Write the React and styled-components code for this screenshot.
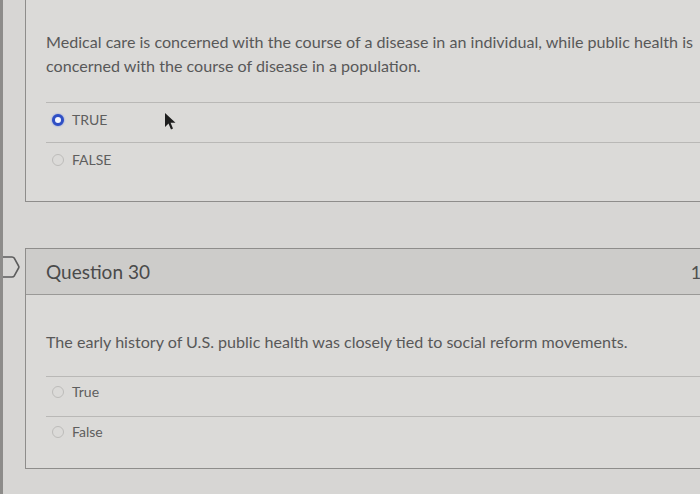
import React from 'react'
import styled, { createGlobalStyle } from 'styled-components'

const GlobalStyle = createGlobalStyle`
	html, body {
		margin: 0;
		padding: 0;
		overflow: hidden;
		background: #d7d6d4;
	}
	body {
		font-family: Lato, "Open Sans", "Liberation Sans", sans-serif;
		color: #585858;
	}
`

const Page = styled.main`
	width: 700px;
	height: 494px;
	overflow: hidden;
	position: relative;
	border-left: 3px solid #8d8c8a;
	box-sizing: border-box;
	display: flex;
	flex-direction: column;
	gap: 46px;
`

const QuestionRow = styled.div`
	display: flex;
	align-items: flex-start;
`

const Gutter = styled.div`
	width: 22px;
	flex: none;
	padding-top: ${({ offset }) => offset || 0}px;
	overflow: hidden;
`

const Card = styled.section`
	flex: none;
	width: 760px;
	background: #dbdad8;
	border: 1px solid #8e8d8b;
	border-top-width: ${({ clipped }) => (clipped ? 0 : 1)}px;
	border-right: none;
	box-sizing: border-box;
`

const Header = styled.header`
	height: 45px;
	display: flex;
	align-items: center;
	justify-content: space-between;
	padding: 0 0 0 20px;
	background: #cdccca;
	border-bottom: 1px solid #9a9997;
	font-size: 19px;
	color: #4a4a4a;
`

const Points = styled.span`
	font-size: 18px;
	margin-right: 55px;
	color: #505050;
`

const Body = styled.div`
	padding: ${({ top }) => top}px 0 ${({ bottom }) => bottom}px 20px;
`

const Prompt = styled.p`
	margin: 0 0 ${({ gap }) => gap}px;
	font-size: 16.1px;
	line-height: 23.5px;
	width: 660px;
`

const Options = styled.ul`
	list-style: none;
	margin: 0;
	padding: 0;
`

const Option = styled.li`
	height: 40px;
	display: flex;
	align-items: center;
	gap: 8px;
	padding: 0 0 ${({ lift }) => lift}px 6px;
	box-sizing: border-box;
	border-top: 1px solid #b9b8b6;
	font-size: 14px;
	color: #5e5e5e;
`

const Radio = styled.span`
	width: 12px;
	height: 12px;
	border-radius: 50%;
	box-sizing: border-box;
	flex: none;
	border: ${({ checked }) => (checked ? '3.5px solid #2f4fc4' : '1.5px solid #bdbcba')};
	background: ${({ checked }) => (checked ? '#f4f6ff' : 'transparent')};
	box-shadow: ${({ checked }) => (checked ? '0 0 2px #6b84e0' : 'none')};
`

const Cursor = styled.svg`
	position: absolute;
	left: 160px;
	top: 112px;
`

function FlagIcon() {
	return (
		<svg width="19" height="24" viewBox="0 0 19 24">
			<path
				d="M-6 2 H9 Q10.5 2 11.4 3.3 L15.6 11 Q16.2 12 15.6 13 L11.4 20.7 Q10.5 22 9 22 H-6"
				fill="none"
				stroke="#5c5c5c"
				strokeWidth="1.6"
				strokeLinejoin="round"
			/>
		</svg>
	)
}

const questions = [
	{
		id: 29,
		text: 'Medical care is concerned with the course of a disease in an individual, while public health is concerned with the course of disease in a population.',
		options: ['TRUE', 'FALSE'],
		answer: 'TRUE',
	},
	{
		id: 30,
		text: 'The early history of U.S. public health was closely tied to social reform movements.',
		options: ['True', 'False'],
	},
]

export default function App() {
	const [first, second] = questions

	return (
		<>
			<GlobalStyle />
			<Page>
				<QuestionRow>
					<Gutter />
					<Card clipped>
						<Body top={30} bottom={19}>
							<Prompt gap={25}>{first.text}</Prompt>
							<Options>
								{first.options.map((o) => (
									<Option key={o} lift={6}>
										<Radio checked={o === first.answer} />
										{o}
									</Option>
								))}
							</Options>
						</Body>
					</Card>
				</QuestionRow>
				<QuestionRow>
					<Gutter offset={7}>
						<FlagIcon />
					</Gutter>
					<Card>
						<Header>
							<span>Question {second.id}</span>
							<Points>1 pts</Points>
						</Header>
						<Body top={35} bottom={12}>
							<Prompt gap={22}>{second.text}</Prompt>
							<Options>
								{second.options.map((o) => (
									<Option key={o} lift={9}>
										<Radio />
										{o}
									</Option>
								))}
							</Options>
						</Body>
					</Card>
				</QuestionRow>
				<Cursor width="14" height="20" viewBox="0 0 14 20">
					<path d="M2 1 L2 15 L5.5 11.5 L8 17.5 L10 16.6 L7.6 10.8 L12.5 10.8 Z" fill="#1e1e1e" />
				</Cursor>
			</Page>
		</>
	)
}
